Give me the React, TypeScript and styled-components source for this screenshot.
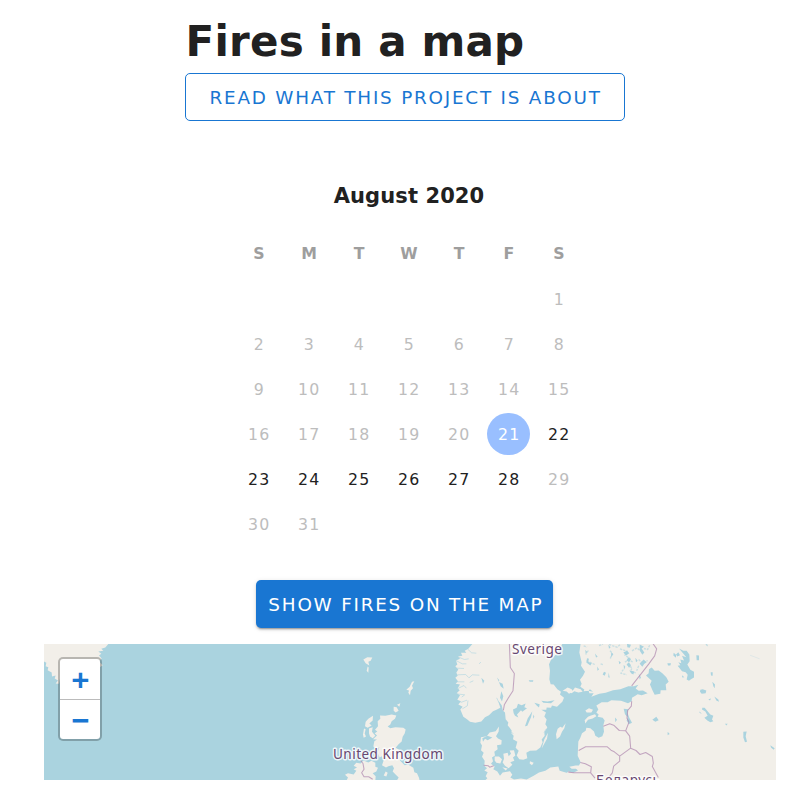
import React from "react";
import styled, { createGlobalStyle } from "styled-components";

const GlobalStyle = createGlobalStyle`
  html { font-size: 21px; }
  body { margin: 0; background: #fff; color: #212121; font-family: "DejaVu Sans", sans-serif; }
  * { box-sizing: border-box; }
`;

const Page = styled.div`
  display: flex;
  flex-direction: column;
  height: 800px;
  overflow: hidden;
  padding: 17px 24px 20px 44px;
`;

const Header = styled.header`
  width: 440px;
  margin-left: 140.6px;
`;

const Title = styled.h1`
  margin: 0;
  height: 56px;
  padding-left: 1px;
  font-size: 42px;
  line-height: 50px;
  letter-spacing: 0.2px;
  white-space: nowrap;
`;

const Button = styled.button<{ $filled?: boolean }>`
  display: flex;
  align-items: center;
  justify-content: center;
  flex: none;
  height: 48px;
  padding: 0 0 0 2px;
  border-radius: 5px;
  font-family: inherit;
  font-size: 18.375px;
  line-height: 21px;
  letter-spacing: 1.78px;
  white-space: nowrap;
  color: ${(p) => (p.$filled ? "#fff" : "#1976d2")};
  background: ${(p) => (p.$filled ? "#1976d2" : "transparent")};
  border: ${(p) => (p.$filled ? "0" : "1.3px solid #1976d2")};
  width: ${(p) => (p.$filled ? "297px" : "440px")};
  box-shadow: ${(p) =>
    p.$filled ? "0 3px 1px -2px rgba(0,0,0,.2), 0 2px 2px rgba(0,0,0,.14), 0 1px 5px rgba(0,0,0,.12)" : "none"};
`;

const Calendar = styled.section`
  width: 350px;
  margin: 62px 0 0 190px;
`;

const Month = styled.h2`
  margin: 0;
  height: 47px;
  font-size: 21px;
  line-height: 26px;
  letter-spacing: 0.1px;
  text-align: center;
`;

const Grid = styled.div`
  display: grid;
  grid-template-columns: repeat(7, 50px);
  grid-auto-rows: 45px;
`;

const Weekday = styled.div`
  height: 47px;
  padding-top: 13.5px;
  text-align: center;
  font-size: 15.75px;
  line-height: 19px;
  font-weight: 700;
  color: #9e9e9e;
`;

const Weekdays = styled.div`
  display: grid;
  grid-template-columns: repeat(7, 50px);
  height: 47.5px;
`;

const Day = styled.div<{ $state: "off" | "on" | "selected" }>`
  display: flex;
  align-items: center;
  justify-content: center;
  width: 42.5px;
  height: 42.5px;
  margin-left: 3px;
  padding: 2px 0 0 2px;
  border-radius: 50%;
  font-size: 15.75px;
  letter-spacing: 1.2px;
  color: ${(p) => ({ off: "#bdbdbd", on: "#212121", selected: "#fff" })[p.$state]};
  background: ${(p) => (p.$state === "selected" ? "#99bfff" : "transparent")};
`;

const ShowRow = styled.div`
  flex: none;
  height: 63.5px;
  margin-top: 32.5px;
  padding-left: 212.4px;
`;

const MapPanel = styled.div`
  position: relative;
  flex: 1;
  min-height: 0;
  overflow: hidden;
  background: #aad3df;
`;

const MapDrawing = styled.svg`
  display: block;
  width: 732px;
  height: 137px;
`;

const ZoomControl = styled.div`
  position: absolute;
  left: 14px;
  top: 13.5px;
  width: 44px;
  border: 2.5px solid rgba(0, 0, 0, 0.24);
  border-radius: 5px;
  background: #fff;
  background-clip: padding-box;
`;

const ZoomKey = styled.div`
  display: flex;
  align-items: center;
  justify-content: center;
  height: 40px;
  padding: 0 0 0 1px;
  color: #1976d2;
  font: bold 28.8px "DejaVu Sans Mono", monospace;
  & + & { border-top: 1px solid #bbb; }
`;

const weekdays = ["S", "M", "T", "W", "T", "F", "S"];
const days = Array.from({ length: 31 }, (_, i) => i + 1);

const Land = styled.path`
  fill: #f2efe9;
`;
const Water = styled.path`
  fill: #aad3df;
`;
const Border = styled.path`
  fill: none;
  stroke: #ae86ae;
  stroke-opacity: 0.7;
  stroke-width: 3.2;
  stroke-linejoin: round;
`;
const Label = styled.text`
  font-family: "Noto Sans", sans-serif;
  fill: #684871;
  stroke: rgba(255, 255, 255, 0.8);
  stroke-width: 3px;
  stroke-linejoin: round;
  paint-order: stroke;
`;

function EuropeMap() {
  return (
    <MapDrawing viewBox="44 643.5 732 137">
      <g transform="translate(40 636) scale(.33333)">
        <Land d="M12 20H207L196 33 184 37 190 43 175 45 184 52 177 57 185 66 177 75 188 86 177 94 165 87 145 107 60 126 57 142 47 141 54 132 44 126 47 117 36 120 35 108 23 101 25 92 17 89 19 79 12 75Z" />
      </g>

      <g transform="translate(320 640) scale(.33333)">
        <Land d="M180 225L196 226 215 222 229 225 225 235 215 242 211 252 203 258 211 263 226 260 250 262 257 267 254 279 248 289 245 303 235 312 227 322 240 329 246 345 240 360 254 374 264 372 280 382 283 395 291 398 297 412 299 421H230L236 411 226 401 218 393 222 383 217 374 205 377 198 381 186 374 191 360 185 347 179 351 173 337 178 320 169 325 160 318 163 302 171 297 159 296 171 285 164 278 172 273 165 268 174 257 173 242 181 235ZM75 403L84 398 101 402 109 391 101 386 111 381 101 376 109 367 122 369 130 360 145 366 154 361 166 367 166 379 174 382 169 393 158 398 167 407 166 421H79L84 411ZM159 226L158 240 148 249 155 255 143 262 135 257 137 244 145 235ZM132 264L137 266 134 279 138 288 131 292 129 282ZM147 264L158 260 156 274 166 286 158 293 150 288 147 278ZM197 393L203 397 199 408 191 405ZM221 199L230 200 236 211 227 216 221 211ZM231 193L241 188 238 199ZM276 124L283 122 276 136 279 143 272 151 270 164 265 157 267 150 259 148 269 139ZM130 57L142 50 157 51 152 61 145 64 148 75 137 68ZM143 78L146 81 145 97 140 91Z" />
        <Border d="M122 360L129 369 132 386 125 397 132 409 146 409 158 416" />
      </g>

      <g transform="translate(450 640) scale(.33333)">
        <Land d="M69 8L55 25 44 31 49 37 33 37 37 46 24 48 30 55 18 60 22 72 16 77 25 87 19 96 23 106 16 112 24 122 17 130 30 132 23 143 29 149 20 158 30 164 22 178 33 182 25 192 38 199 31 207 40 229 51 236 60 244 76 247 94 243 105 230 117 224 129 212 141 207 151 202 145 181 155 194 159 211 165 216 167 236 175 246 173 254 185 270 184 278 191 286 189 296 202 304 197 322 206 331 200 345 208 356 220 358 232 353 229 337 240 331 259 330 271 321 278 305 275 297 284 286 283 276 292 260 286 251 290 237 283 228 288 216 274 208 289 208 290 201 303 202 306 195 321 199 337 184 342 172 330 162 333 154 322 146 311 132 302 131 298 116 300 91 297 71 306 52 322 39 338 8ZM93 290L110 287 119 276 137 272 147 258 146 273 138 287 144 294 155 299 154 312 141 314 143 326 133 334 135 345 126 351 129 362 123 370 134 378 130 386 142 393 150 406 158 396 180 392 187 403 181 411 192 417 213 414 230 417 251 406 267 396 286 391 301 381 325 378 329 391 347 396 363 400 390 398V422H103L112 413 107 407 113 395 103 390 111 383 103 376 104 361 96 349 101 337 93 329 96 315 91 307ZM134 348L147 348 156 356 151 369 139 367 134 360ZM160 340L173 337 176 347 183 340 179 330 192 329 196 345 189 351 193 361 181 365 187 373 176 383 165 376 158 366 162 355ZM157 380L173 384 167 390ZM240 362L251 367 246 374 239 369ZM275 324L283 296 294 277 291 295ZM320 296L318 281 323 265 331 259 337 262 347 248 343 263 336 274 330 288ZM353 141L365 146 368 154 357 160 350 153 338 151Z" />
        <Water d="M191 218L189 207 200 202 204 190 215 194 227 189 223 200 231 203 217 214 213 209 201 222 205 231 195 226ZM225 257L233 234 247 212 243 230 232 256ZM236 119L250 119 249 124 239 124ZM274 181L292 183 314 179 303 188 280 187ZM253 187L269 191 267 201 260 195ZM250 222L253 229 249 235ZM141 111L148 119 145 124 158 130 161 145 152 137ZM94 112L103 121 99 130ZM154 152L160 167 156 183 150 172ZM97 293L112 286 127 291 113 299 105 295 99 304Z" />
        <path d="M16 59L37 70 49 70M24 49L43 57 56 55M20 83L42 84M22 103L47 102 57 112 67 103 88 104M22 124L43 124M24 144L42 135 49 143M20 160L44 163 35 170M32 186L51 179M37 205L52 196 54 180M53 26L65 37 79 38M87 70L93 65M59 126L70 121M140 172L151 195M282 276L288 266M182 275L190 279" fill="none" stroke="#aad3df" strokeWidth="2.3" opacity=".75" />
        <Border d="M178 8L181 81 193 99 189 151 174 174 163 193 160 210M101 374L115 376 119 380 131 376M354 394L370 398 390 398" />
      </g>

      <g transform="translate(560 640) scale(.33333)">
        <Land d="M62 8L58 36 65 65 63 76 75 94 69 106 60 118 65 130 61 139 73 147 71 152 86 151 88 158 101 158 94 169 118 160 137 157 159 149 181 146 205 137 222 137 235 133 227 144 236 151 249 150 263 158 245 164 233 161 226 166 216 172 215 182 204 188 183 181 154 179 143 185 125 185 109 195 115 207 109 216 116 222 113 229 128 232 134 240 130 254 132 274 127 287 116 292 106 286 102 273 91 263 79 262 77 271 66 278 61 292 55 303 53 346 62 365 57 375 47 375 28 379 35 385 48 385 54 390 40 397 25 393 19 399 0 397V423H651V8ZM76 210L87 203 99 208 94 216 80 216ZM74 239L84 229 93 225 105 221 109 227 98 234 84 238 76 249ZM20 151L29 144 38 151 45 141 62 146 68 154 55 156 43 152 35 158ZM90 146L99 154 85 151Z" />
        <Water d="M258 105L266 98 267 86 275 81 284 91 296 90 307 98 319 110 326 124 317 132 319 149 302 149 301 160 284 163 278 151 270 132 275 121ZM191 205L205 206 202 216 208 232 216 247 207 251 200 241 203 230 195 221ZM165 231L171 238 166 245ZM281 235L289 229 296 239 286 244 277 238ZM348 42L355 35 360 44 352 48ZM76 28L82 35 77 39ZM81 53L87 55 84 64 95 68 91 75 79 66ZM105 39L113 49 108 51ZM145 13L152 20 147 25ZM154 35L160 41 153 50ZM201 10L213 13 209 22 202 20ZM239 12L252 19 245 24 253 36 247 43 239 30ZM190 36L201 31 208 38 198 45ZM205 50L213 56 207 66 213 74 207 82 200 71 207 65 200 59ZM226 52L233 61 228 65ZM244 64L251 57 260 65 253 70 247 79 239 70ZM191 73L196 79 192 88ZM176 61L183 67 178 71ZM208 90L223 93 220 102 214 99ZM132 94L138 97 134 106 128 102ZM146 96L149 112 145 110ZM112 78L117 87 112 91ZM236 99L243 111 239 117Z" />
        <path d="M147 12L171 20 180 13M180 25L201 32 195 44 211 55M195 65L205 58 218 64M201 72L216 82 212 92 227 97M236 57L248 69 263 60M216 31L231 22 239 29M150 31L157 38 151 54M85 30L77 42M80 60L104 72M122 70L130 73M117 15L129 11M71 16L81 20M190 87L183 98 200 103M269 14L263 27 252 24M236 76L230 91M325 278L327 282" fill="none" stroke="#aad3df" strokeWidth="4" strokeDasharray="7 3" opacity=".6" />
        <Border d="M278 8L290 25 284 46 266 71 215 136M215 182L214 197 203 210 201 233 207 245 197 271 178 270 161 254 149 250 130 257M197 271L209 287 212 323 179 347 163 334 153 329 142 319 77 319 56 330M212 323L228 330 240 342 257 336 277 348 280 368 277 378 295 411M61 366L76 370 94 379 92 397 105 413M25 395L42 397 92 397M179 347L179 362 161 377 157 397 141 417" />
      </g>

      <g transform="translate(660 640) scale(.33333)">
        <Water d="M57 24L70 31 80 31 88 42 89 62 82 72 91 88 102 94 102 111 93 116 87 121 80 117 83 103 77 95 66 92 53 76 61 74 55 65 64 68 61 57 72 60 66 46 79 50 69 38ZM41 37L48 43 48 52 40 45ZM109 44L117 45 117 59 110 59ZM22 68L33 68 31 75 24 75ZM66 104L73 110 67 111ZM152 95L158 95 158 106 153 105ZM157 124L165 132 164 143 160 137ZM121 148L128 146 139 150 137 158 125 160 120 154ZM145 176L153 174 150 180ZM163 168L175 177 177 184 169 180ZM127 202L134 202 151 222 160 226 156 237 160 242 151 245 142 240 133 232 143 226 136 213 126 207ZM119 213L126 221 118 216ZM195 250L203 250 199 255ZM250 274L260 273 257 287 261 304 255 305 250 291ZM331 314L344 323 341 328 333 321ZM136 10L143 13 142 18ZM23 274L28 280 23 284Z" />
        <path d="M270 44L283 49 299 55" fill="none" stroke="#aad3df" strokeWidth="2" opacity=".4" />
      </g>

      <Label x="512" y="653" fontSize="13.6" textLength="50">Sverige</Label>
      <Label x="333" y="758.6" fontSize="13.6" textLength="110">United Kingdom</Label>
      <Label x="596" y="784.4" fontSize="13.6" textLength="64">Беларусь</Label>
    </MapDrawing>
  );
}

export default function App() {
  return (
    <>
      <GlobalStyle />
      <Page>
        <Header>
          <Title>Fires in a map</Title>
          <Button>READ WHAT THIS PROJECT IS ABOUT</Button>
        </Header>
        <Calendar>
          <Month>August 2020</Month>
          <Weekdays>
            {weekdays.map((name, i) => (
              <Weekday key={i}>{name}</Weekday>
            ))}
          </Weekdays>
          <Grid>
            {Array.from({ length: 6 }, (_, i) => (
              <span key={`blank-${i}`} />
            ))}
            {days.map((day) => (
              <Day key={day} $state={day === 21 ? "selected" : day > 21 && day < 29 ? "on" : "off"}>
                {day}
              </Day>
            ))}
          </Grid>
        </Calendar>
        <ShowRow>
          <Button $filled>SHOW FIRES ON THE MAP</Button>
        </ShowRow>
        <MapPanel>
          <EuropeMap />
          <ZoomControl>
            <ZoomKey>+</ZoomKey>
            <ZoomKey>−</ZoomKey>
          </ZoomControl>
        </MapPanel>
      </Page>
    </>
  );
}
